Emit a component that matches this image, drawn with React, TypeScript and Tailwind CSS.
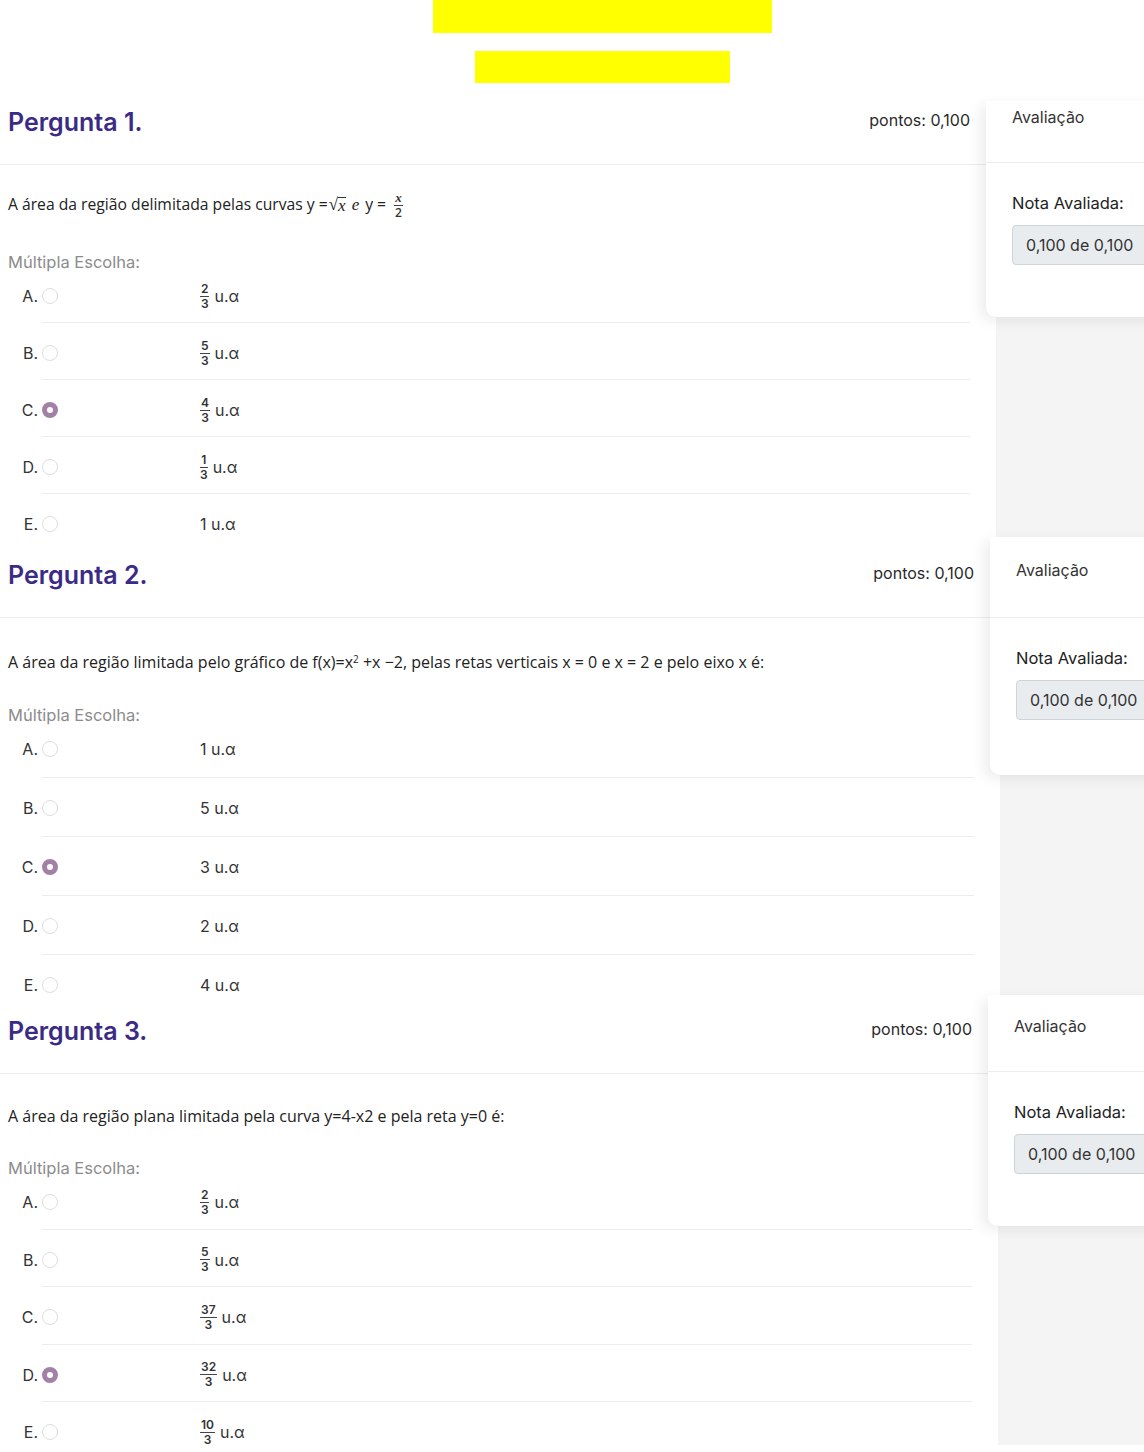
import type { ReactNode } from "react"

const inter = "font-['Inter','Noto_Sans',sans-serif]"
const open = "font-['Open_Sans','Noto_Sans',sans-serif]"

function Frac({ n, d, italic }: { n: ReactNode; d: ReactNode; italic?: boolean }) {
    return (
        <span className="inline-flex flex-col items-center text-[12px] leading-[14px] font-semibold text-[#333] mr-[5px]">
            <span className={italic ? "px-[1px] font-['Liberation_Serif',serif] italic text-[13px]" : "px-[1px]"}>{n}</span>
            <span className="h-px w-full bg-[#444]" />
            <span>{d}</span>
        </span>
    )
}

function Radio({ on }: { on?: boolean }) {
    if (on) return <span className="w-4 h-4 rounded-full border-[5px] border-[#a381a6] bg-white shrink-0" />
    return <span className="w-4 h-4 rounded-full border border-[#dedede] bg-white shrink-0" />
}

type Opt = { frac?: [string, string]; text: string }

type Section = {
    num: number
    pad: string
    rowH: string
    lastH: string
    qClass: string
    multMt: string
    side: string
    cardHead: string
    cardPb: string
    question: ReactNode
    opts: Opt[]
    sel: number
}

const sections: Section[] = [
    {
        num: 1,
        pad: "pt-0",
        rowH: "h-[57px]",
        lastH: "h-[43px]",
        qClass: "text-[15.7px] pt-[28px]",
        multMt: "mt-[37px]",
        side: "w-[148px]",
        cardHead: "h-[62px]",
        cardPb: "pb-[52px]",
        question: (
            <span className="inline-flex items-center">
                A área da região delimitada pelas curvas y =
                <span className="font-['Liberation_Serif',serif] text-[17px] ml-[1px]">√</span>
                <span className="border-t border-[#333] leading-[16px] font-['Liberation_Serif',serif] italic text-[17px] mr-[6px]">x</span>
                <span className="font-['Liberation_Serif',serif] italic text-[17px] mr-[6px]">e</span>
                y =&nbsp;&nbsp;
                <Frac n="x" d="2" italic />
            </span>
        ),
        opts: [
            { frac: ["2", "3"], text: "u.α" },
            { frac: ["5", "3"], text: "u.α" },
            { frac: ["4", "3"], text: "u.α" },
            { frac: ["1", "3"], text: "u.α" },
            { text: "1 u.α" },
        ],
        sel: 2,
    },
    {
        num: 2,
        pad: "pt-[17px]",
        rowH: "h-[59px]",
        lastH: "h-[40px]",
        qClass: "text-[16px] pt-[32px]",
        multMt: "mt-[33px]",
        side: "w-[144px]",
        cardHead: "h-[64px]",
        cardPb: "pb-[55px]",
        question: (
            <span>
                A área da região limitada pelo gráfico de f(x)=x<sup className="text-[10px]">2</sup> +x −2, pelas retas verticais x = 0 e x = 2 e pelo eixo x é:
            </span>
        ),
        opts: [
            { text: "1 u.α" },
            { text: "5 u.α" },
            { text: "3 u.α" },
            { text: "2 u.α" },
            { text: "4 u.α" },
        ],
        sel: 2,
    },
    {
        num: 3,
        pad: "pt-[15px]",
        rowH: "h-[57.5px]",
        lastH: "h-[43px]",
        qClass: "text-[16px] pt-[30px]",
        multMt: "mt-[32px]",
        side: "w-[146px]",
        cardHead: "h-[62px]",
        cardPb: "pb-[52px]",
        question: <span>A área da região plana limitada pela curva y=4-x2 e pela reta y=0 é:</span>,
        opts: [
            { frac: ["2", "3"], text: "u.α" },
            { frac: ["5", "3"], text: "u.α" },
            { frac: ["37", "3"], text: "u.α" },
            { frac: ["32", "3"], text: "u.α" },
            { frac: ["10", "3"], text: "u.α" },
        ],
        sel: 3,
    },
]

function Question({ s }: { s: Section }) {
    const letters = ["A.", "B.", "C.", "D.", "E."]
    return (
        <div className="flex">
            <div className={`flex-1 min-w-0 ${s.pad}`}>
                <div className="h-[64px] border-b border-[#ececec] flex justify-between pl-2 pr-[26px]">
                    <h2 className={`${inter} text-[25px] leading-[32px] pt-[5px] font-semibold text-[#3b2b85]`}>Pergunta {s.num}.</h2>
                    <span className={`${inter} text-[16px] leading-[24px] pt-[7px] text-[#2a2a2a]`}>pontos: 0,100</span>
                </div>
                <div className="pl-2">
                    <div className={`${open} ${s.qClass} text-[#222]`}>
                        <div className="h-[24px] flex items-center">{s.question}</div>
                    </div>
                    <div className={`${inter} text-[16.5px] leading-[16px] ${s.multMt} text-[#8c8c8c]`}>Múltipla Escolha:</div>
                </div>
                <div className={`${inter} -mt-[4px] text-[16px] text-[#333]`}>
                    {s.opts.map((o, i) => {
                        const last = i === s.opts.length - 1
                        return (
                            <div key={i} className={`ml-[42px] mr-[26px] pt-[18px] ${last ? s.lastH : `${s.rowH} border-b border-[#ececec]`}`}>
                                <div className="flex items-center h-[24px]">
                                    <span className="-ml-[22px] w-[18px] text-right">{letters[i]}</span>
                                    <span className="ml-[4px] flex items-center"><Radio on={i === s.sel} /></span>
                                    <span className="ml-[142px] flex items-center">
                                        {o.frac && <Frac n={o.frac[0]} d={o.frac[1]} />}
                                        {o.text}
                                    </span>
                                </div>
                            </div>
                        )
                    })}
                </div>
            </div>
            <div className={`${s.side} shrink-0 bg-[#f4f4f4]`}>
                <div className={`relative z-10 -ml-[10px] w-[180px] bg-white rounded-bl-[10px] shadow-[-6px_4px_14px_rgba(0,0,0,0.07)] ${s.pad}`}>
                    <div className={`${inter} ${s.cardHead} border-b border-[#ececec] pl-[26px] pt-[4px] text-[16px] leading-[24px] text-[#333]`}>Avaliação</div>
                    <div className={`pl-[26px] ${s.cardPb}`}>
                        <div className={`${inter} pt-[28px] text-[16.5px] leading-[24px] text-[#222]`}>Nota Avaliada:</div>
                        <div className={`${inter} mt-[10px] h-[40px] w-[170px] flex items-center pl-[13px] bg-[#e9ecef] border border-[#ced4da] rounded-[4px] text-[16px] text-[#333]`}>0,100 de 0,100</div>
                    </div>
                </div>
            </div>
        </div>
    )
}

export default function App() {
    return (
        <div className="w-[1144px] h-[1452px] overflow-hidden bg-white">
            <div className="h-[101px] pl-[61px] flex flex-col items-center">
                <div className="w-[339px] h-[33px] bg-[#ffff00]" />
                <div className="w-[255px] h-[32px] mt-[18px] bg-[#ffff00]" />
            </div>
            {sections.map(s => <Question key={s.num} s={s} />)}
        </div>
    )
}
